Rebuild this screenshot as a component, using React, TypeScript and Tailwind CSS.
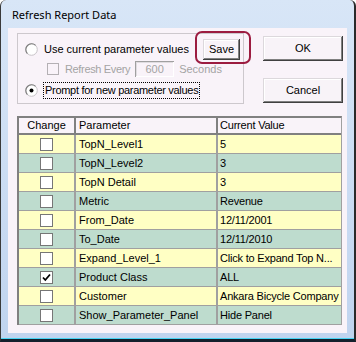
import React from 'react';
import clsx from 'clsx';

type ParamRow = {
  name: string;
  value: string;
  checked?: boolean;
};

// rows of the parameter grid, colours alternate yellow / green
const rows: ParamRow[] = [
  { name: 'TopN_Level1', value: '5' },
  { name: 'TopN_Level2', value: '3' },
  { name: 'TopN Detail', value: '3' },
  { name: 'Metric', value: 'Revenue' },
  { name: 'From_Date', value: '12/11/2001' },
  { name: 'To_Date', value: '12/11/2010' },
  { name: 'Expand_Level_1', value: 'Click to Expand Top N...' },
  { name: 'Product Class', value: 'ALL', checked: true },
  { name: 'Customer', value: 'Ankara Bicycle Company' },
  { name: 'Show_Parameter_Panel', value: 'Hide Panel' },
];

function Radio({ checked = false }: { checked?: boolean }) {
  return (
    <svg width="13" height="13" viewBox="0 0 13 13" className="shrink-0">
      <circle cx="6.5" cy="6.5" r="5.8" fill="#ffffff" stroke="#c8c4c8" />
      <path d="M2.4 10.6 A5.8 5.8 0 0 1 10.6 2.4" stroke="#7c7c7c" strokeWidth="1.1" fill="none" />
      {checked && <circle cx="6.5" cy="6.5" r="2" fill="#000000" />}
    </svg>
  );
}

function GridCheck({ checked = false }: { checked?: boolean }) {
  return (
    <div className="flex h-[13px] w-[13px] items-center justify-center border border-[#767676] bg-white">
      {checked && (
        <svg width="9" height="9" viewBox="0 0 9 9">
          <path d="M1 4.5 L3.3 7 L8 1.5" stroke="#000000" strokeWidth="1.8" fill="none" />
        </svg>
      )}
    </div>
  );
}

function WinButton({ label, className }: { label: string; className?: string }) {
  return (
    <div
      className={clsx(
        'flex items-center justify-center bg-[#f8f3f8] text-black shadow-[inset_-1px_-1px_0_#404040,inset_1px_1px_0_#dcd8dc,inset_-2px_-2px_0_#808080,inset_2px_2px_0_#ffffff]',
        className
      )}
    >
      {label}
    </div>
  );
}

export default function App() {
  return (
    <div className="h-[342px] w-[356px] bg-white">
      <div className="flex h-full w-full flex-col rounded-t-[6px] border-b-[3px] border-l border-r-2 border-b-[#14202c] border-l-[#3a3a3a] border-r-[#2a2a2a] bg-gradient-to-b from-[#d8e6f7] to-[#c0d4ef]">
        {/* title bar */}
        <div className="flex h-[28px] shrink-0 items-center pl-[11px] pt-[3px] font-['Noto_Sans',sans-serif] text-[11px] text-black">
          Refresh Report Data
        </div>

        {/* client area */}
        <div className="flex flex-1 flex-col border-b border-b-[#48d4f4] px-[7px] pb-[5px]">
          <div className="flex flex-1 flex-col bg-[#f9f3f9] pl-[9px] pt-[5px] font-['Liberation_Sans',Arial,sans-serif] text-[11px] text-black">
            <div className="flex h-[71px]">
              {/* option group */}
              <div className="relative flex h-[71px] w-[227px] flex-col border border-[#cdc8cd] pr-[3px] pt-[5px]">
                <div className="flex h-[20px] items-center pl-[7px]">
                  <Radio />
                  <span className="ml-[6px] whitespace-nowrap">Use current parameter values</span>
                  <WinButton label="Save" className="ml-auto h-[21px] w-[37px]" />
                </div>
                <div className="flex h-[20px] items-center pl-[29px] text-[#a4a4a4]">
                  <div className="h-[12px] w-[12px] border border-[#b4b0b4] bg-[#f9f3f9]" />
                  <span className="ml-[6px] whitespace-nowrap tracking-[-0.35px]">Refresh Every</span>
                  <div className="ml-[5px] flex h-[16px] w-[39px] items-center justify-center bg-[#f9f3f9] shadow-[inset_1px_1px_0_#a0a0a0,inset_-1px_-1px_0_#ffffff,inset_2px_2px_0_#e0dce0]">
                    600
                  </div>
                  <span className="ml-[5px] whitespace-nowrap">Seconds</span>
                </div>
                <div className="mt-[1px] flex h-[20px] items-center pl-[7px]">
                  <Radio checked />
                  <span className="ml-[5px] flex h-[17px] items-center whitespace-nowrap border border-dotted border-black px-[1px] tracking-[-0.3px]">
                    Prompt for new parameter values
                  </span>
                </div>

                {/* red highlight drawn round the Save button */}
                <div className="absolute left-[177px] top-[-3px] h-[33px] w-[56px] rounded-[7px] border-2 border-[#9c1c40]" />
              </div>

              {/* dialog buttons */}
              <div className="ml-[19px] flex flex-col pt-[3px]">
                <WinButton label="OK" className="h-[25px] w-[80px]" />
                <WinButton label="Cancel" className="mt-[17px] h-[25px] w-[80px]" />
              </div>
            </div>

            {/* parameter grid */}
            <div className="mt-[12px] w-[325px] border-l-2 border-r border-t-2 border-l-[#808080] border-r-[#a0a0a0] border-t-[#808080]">
              <div className="flex h-[17px] border-b-2 border-b-[#808080]">
                <div className="flex w-[57px] items-center justify-center border-r-2 border-r-[#808080]">Change</div>
                <div className="flex w-[142px] items-center border-r-2 border-r-[#808080] pl-[3px]">Parameter</div>
                <div className="flex flex-1 items-center pl-[2px] tracking-[-0.2px]">Current Value</div>
              </div>
              {rows.map((row, i) => (
                <div
                  key={row.name}
                  className={clsx(
                    'flex h-[19px] border-b border-b-[#a0a0a0]',
                    i % 2 === 0 ? 'bg-[#ffffc4]' : 'bg-[#bedcce]'
                  )}
                >
                  <div className="flex w-[57px] items-center justify-center border-r-2 border-r-[#a0a0a0]">
                    <GridCheck checked={row.checked} />
                  </div>
                  <div className="flex w-[142px] items-center overflow-hidden whitespace-nowrap border-r-2 border-r-[#a0a0a0] pl-[3px]">
                    {row.name}
                  </div>
                  <div className="flex w-[122px] items-center overflow-hidden whitespace-nowrap pl-[2px] tracking-[-0.2px]">
                    {row.value}
                  </div>
                </div>
              ))}
            </div>
          </div>
        </div>
      </div>
    </div>
  );
}
